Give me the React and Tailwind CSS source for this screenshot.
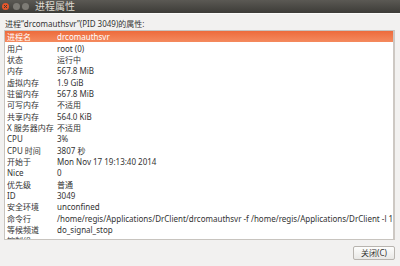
const rows = [
  ["进程名", "drcomauthsvr"],
  ["用户", "root (0)"],
  ["状态", "运行中"],
  ["内存", "567.8 MiB"],
  ["虚拟内存", "1.9 GiB"],
  ["驻留内存", "567.8 MiB"],
  ["可写内存", "不适用"],
  ["共享内存", "564.0 KiB"],
  ["X 服务器内存", "不适用"],
  ["CPU", "3%"],
  ["CPU 时间", "3807 秒"],
  ["开始于", "Mon Nov 17 19:13:40 2014"],
  ["Nice", "0"],
  ["优先级", "普通"],
  ["ID", "3049"],
  ["安全环境", "unconfined"],
  ["命令行", "/home/regis/Applications/DrClient/drcomauthsvr -f /home/regis/Applications/DrClient -l 1"],
  ["等候频道", "do_signal_stop"],
  ["控制组", ""],
];

export default function App() {
  return (
    <div
      className="w-[400px] h-[266px] bg-[#f2f1f0] flex flex-col overflow-hidden text-[#333333]"
      style={{ fontFamily: '"Noto Sans", "Noto Sans CJK SC", sans-serif' }}
    >
      <div className="h-[13px] bg-gradient-to-b from-[#5b5954] to-[#3d3c38] flex items-center shrink-0">
        <div className="flex items-center pl-[2px]">
          <div className="w-[7px] h-[7px] rounded-full bg-[#e8562a] flex items-center justify-center">
            <svg width="5" height="5" viewBox="0 0 5 5">
              <path d="M1 1L4 4M4 1L1 4" stroke="#3c3b37" strokeWidth="1" />
            </svg>
          </div>
          <div className="w-[7px] h-[7px] rounded-full bg-[#7d7b75] ml-[4px]" />
          <div className="w-[7px] h-[7px] rounded-full bg-[#7d7b75] ml-[2px]" />
        </div>
        <div className="ml-[6px] text-[10px] leading-[13px] text-[#dfdbd2]">进程属性</div>
      </div>
      <div className="h-px bg-[#fbfbfa] shrink-0" />
      <div className="pl-[5px] pt-[4px] text-[8px] leading-[11px] h-[16px] shrink-0">
        进程“drcomauthsvr”(PID 3049)的属性:
      </div>
      <div className="ml-[4px] w-[391px] h-[210px] bg-white border-t border-l border-b border-[#c8c4bf] border-r-2 border-r-[#cdc8c3] overflow-hidden shrink-0">
        {rows.map(([k, v], i) => (
          <div
            key={i}
            className={
              "flex h-[11.35px] items-center text-[8px] leading-[11px] whitespace-nowrap " +
              (i === 0 ? "bg-gradient-to-b from-[#ed6b3b] to-[#f48a5e] text-white" : "")
            }
          >
            <div className="w-[52px] pl-[2px] shrink-0">{k}</div>
            <div>{v}</div>
          </div>
        ))}
      </div>
      <div className="flex justify-end pr-[5px] pt-[6px]">
        <button className="w-[42px] h-[14px] rounded-[2px] border border-[#b8b4af] bg-gradient-to-b from-[#fdfdfc] to-[#e9e8e6] text-[8px] leading-[12px] text-[#333333]">
          关闭(C)
        </button>
      </div>
    </div>
  );
}
